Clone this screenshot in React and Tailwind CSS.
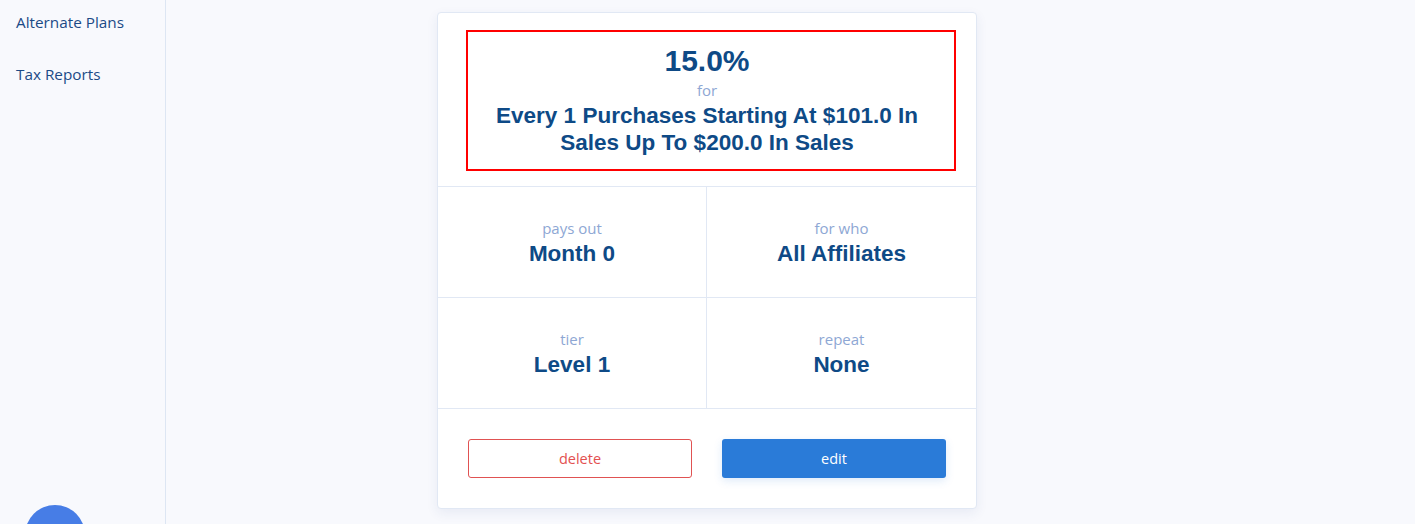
export default function App() {
  const cell = (label, value, extra = "") => (
    <div className={`flex h-[111px] flex-col items-center justify-center pt-[1px] ${extra}`}>
      <div className="text-[15px] leading-[21px] text-[#8ea7d4]" style={{ fontFamily: '"Open Sans", sans-serif' }}>{label}</div>
      <div className="mt-[2px] text-[22.5px] font-bold leading-[26px] text-[#0e4a86]" style={{ fontFamily: '"Liberation Sans", Arial, sans-serif' }}>{value}</div>
    </div>
  );
  return (
    <div className="flex h-[524px] w-[1415px] overflow-hidden bg-[#f8f9fd]">
      <aside className="relative flex w-[166px] shrink-0 flex-col border-r border-[#dde6f3] pl-4 pt-[11px]" style={{ fontFamily: '"Open Sans", sans-serif' }}>
        <div className="text-[15.3px] leading-[22px] text-[#1b4a86]">Alternate Plans</div>
        <div className="mt-[30px] text-[15.3px] leading-[22px] text-[#1b4a86]">Tax Reports</div>
        <div className="absolute left-[25px] top-[505px] h-[60px] w-[60px] rounded-full bg-[#477de6]"></div>
      </aside>
      <main className="flex-1 pl-[271px] pt-[12px]">
        <div className="w-[540px] rounded-[4px] border border-[#e1e8f4] bg-white shadow-[0_4px_12px_rgba(40,70,140,0.08)]">
          <div className="pb-[15px] pl-[28px] pt-[17px]">
            <div className="flex h-[141px] w-[490px] flex-col items-center border-2 border-[#ff0000] pr-[8px] pt-[11px] text-center">
              <div className="text-[30px] font-bold leading-[36px] text-[#0e4a86]" style={{ fontFamily: '"Liberation Sans", Arial, sans-serif' }}>15.0%</div>
              <div className="mt-[1px] text-[15px] leading-[20px] text-[#8ea7d4]" style={{ fontFamily: '"Open Sans", sans-serif' }}>for</div>
              <div className="mt-[2px] px-[20px] text-[22.5px] font-bold leading-[27px] text-[#0e4a86]" style={{ fontFamily: '"Liberation Sans", Arial, sans-serif' }}>Every 1 Purchases Starting At $101.0 In Sales Up To $200.0 In Sales</div>
            </div>
          </div>
          <div className="grid grid-cols-2 border-t border-[#e1e8f4]">
            {cell("pays out", "Month 0", "border-r border-b border-[#e1e8f4]")}
            {cell("for who", "All Affiliates", "border-b border-[#e1e8f4]")}
            {cell("tier", "Level 1", "border-r border-b border-[#e1e8f4]")}
            {cell("repeat", "None", "border-b border-[#e1e8f4]")}
          </div>
          <div className="flex justify-between px-[30px] pb-[30px] pt-[30px]" style={{ fontFamily: '"Open Sans", sans-serif' }}>
            <button className="h-[39px] w-[224px] rounded-[3px] border border-[#e05252] bg-white text-[14.5px] text-[#e35050]">delete</button>
            <button className="h-[39px] w-[224px] rounded-[3px] bg-[#2a7bd8] text-[14.5px] text-white shadow-[0_3px_8px_rgba(42,123,216,0.15)]">edit</button>
          </div>
        </div>
      </main>
    </div>
  );
}
